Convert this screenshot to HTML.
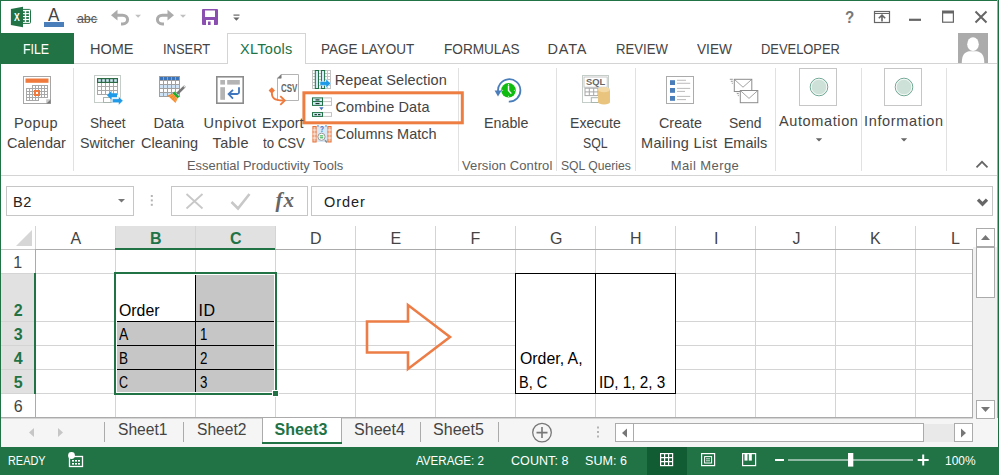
<!DOCTYPE html>
<html><head><meta charset="utf-8"><title>Excel</title>
<style>
html,body{margin:0;padding:0;background:#fff;}
#app{position:relative;width:999px;height:475px;overflow:hidden;background:#fff;font-family:"Liberation Sans",sans-serif;}
.t{position:absolute;transform-origin:0 0;white-space:pre;line-height:1;font-family:"Liberation Sans",sans-serif;}
#bg{position:absolute;left:0;top:0;}

</style></head><body>
<div id="app">
<svg id="bg" width="999" height="475" viewBox="0 0 999 475">
<g shape-rendering="crispEdges">
<!-- window borders -->
<rect x="0" y="0" width="999" height="1" fill="#217346"/>
<rect x="0" y="0" width="1" height="475" fill="#217346"/>
<rect x="997" y="0" width="1" height="475" fill="#8fb8a1"/>
<rect x="998" y="0" width="1" height="475" fill="#1c6e40"/>
<!-- FILE tab -->
<rect x="1" y="33" width="73" height="31" fill="#217346"/>
<!-- ribbon tab line -->
<rect x="74" y="63" width="923" height="1" fill="#d4d4d4"/>
<rect x="228" y="63" width="77" height="1" fill="#fff"/>
<rect x="227" y="33" width="1" height="31" fill="#d4d4d4"/>
<rect x="305" y="33" width="1" height="31" fill="#d4d4d4"/>
<rect x="227" y="33" width="79" height="1" fill="#d4d4d4"/>
<!-- ribbon bottom -->
<rect x="1" y="175" width="996" height="1" fill="#d4d4d4"/>
<!-- group separators -->
<g fill="#e1e1e1">
<rect x="73" y="68" width="1" height="103"/>
<rect x="458" y="68" width="1" height="103"/>
<rect x="556" y="68" width="1" height="103"/>
<rect x="635" y="68" width="1" height="103"/>
<rect x="775" y="68" width="1" height="103"/>
<rect x="861" y="68" width="1" height="103"/>
<rect x="946" y="68" width="1" height="103"/>
</g>
<!-- avatar -->
<rect x="958" y="33" width="30" height="30" fill="#ababab"/>
<!-- formula bar boxes -->
<g fill="#fff" stroke="#c6c6c6" stroke-width="1">
<rect x="6.5" y="186.5" width="127" height="29"/>
<rect x="171.5" y="186.5" width="136" height="29"/>
<rect x="311.5" y="186.5" width="681" height="29"/>
</g>
<!-- grid headers -->
<rect x="115" y="226" width="160" height="23" fill="#e1e1e1"/>
<rect x="1" y="273" width="34" height="121" fill="#e1e1e1"/>
<!-- gridlines -->
<g fill="#d4d4d4" id="gl">
<rect x="35" y="226" width="1" height="23"/>
<rect x="1" y="249" width="34" height="1" fill="#c6c6c6"/>
<rect x="35" y="273" width="938" height="1"/>
<rect x="35" y="321" width="938" height="1"/>
<rect x="35" y="345" width="938" height="1"/>
<rect x="35" y="369" width="938" height="1"/>
<rect x="35" y="393" width="938" height="1"/>
<rect x="115" y="226" width="1" height="191"/>
<rect x="195" y="226" width="1" height="191"/>
<rect x="275" y="226" width="1" height="191"/>
<rect x="355" y="226" width="1" height="191"/>
<rect x="435" y="226" width="1" height="191"/>
<rect x="515" y="226" width="1" height="191"/>
<rect x="595" y="226" width="1" height="191"/>
<rect x="675" y="226" width="1" height="191"/>
<rect x="755" y="226" width="1" height="191"/>
<rect x="835" y="226" width="1" height="191"/>
<rect x="915" y="226" width="1" height="191"/>
<rect x="1" y="273" width="34" height="1"/>
<rect x="1" y="321" width="34" height="1"/>
<rect x="1" y="345" width="34" height="1"/>
<rect x="1" y="369" width="34" height="1"/>
<rect x="1" y="393" width="34" height="1"/>
</g>
<!-- header borders -->
<g fill="#ababab">
<rect x="35" y="249" width="938" height="1"/>
<rect x="35" y="249" width="1" height="168"/>
<rect x="972" y="249" width="1" height="169"/>
<rect x="1" y="417" width="972" height="1"/>
</g>
<rect x="115" y="248" width="160" height="2" fill="#217346"/>
<rect x="34" y="273" width="2" height="121" fill="#217346"/>
<!-- corner triangle -->
<polygon points="32,230 32,246 16,246" fill="#d6d6d6" shape-rendering="geometricPrecision"/>
<!-- selection -->
<rect x="114" y="272" width="163" height="123" fill="#217346"/>
<rect x="116" y="274" width="159" height="119" fill="#fff"/>
<rect x="117" y="275" width="157" height="117" fill="#c6c6c6"/>
<rect x="117" y="275" width="78" height="46" fill="#fff"/>
<g fill="#000">
<rect x="195" y="275" width="1" height="117"/>
<rect x="117" y="321" width="157" height="1"/>
<rect x="117" y="345" width="157" height="1"/>
<rect x="117" y="369" width="157" height="1"/>
</g>
<rect x="272" y="390" width="7" height="7" fill="#fff"/>
<rect x="273" y="391" width="5" height="5" fill="#217346"/>
<!-- result box -->
<rect x="515" y="273" width="161" height="121" fill="#000"/>
<rect x="516" y="274" width="79" height="119" fill="#fff"/>
<rect x="596" y="274" width="79" height="119" fill="#fff"/>
<!-- sheet tab bar -->
<rect x="1" y="418" width="997" height="29" fill="#f5f5f5"/>
<rect x="616" y="424" width="357" height="18" fill="#e9e9e9"/>
<rect x="1" y="418" width="972" height="1" fill="#d4d4d4"/>
<rect x="262" y="418" width="80" height="26" fill="#fff"/>
<rect x="262" y="418" width="1" height="26" fill="#ababab"/>
<rect x="341" y="418" width="1" height="26" fill="#ababab"/>
<rect x="262" y="442" width="80" height="2" fill="#217346"/>
<g fill="#ababab">
<rect x="104" y="422" width="1" height="20"/>
<rect x="183" y="422" width="1" height="20"/>
<rect x="420" y="422" width="1" height="20"/>
<rect x="498" y="422" width="1" height="20"/>
</g>
<!-- status bar -->
<rect x="0" y="447" width="999" height="28" fill="#217346"/>
<rect x="647" y="447" width="40" height="28" fill="#125c33"/>
<!-- scrollbars -->
<rect x="973" y="247" width="24" height="171" fill="#f1f1f1"/>
<g fill="#fff" stroke="#ababab">
<rect x="976.5" y="228.5" width="18" height="18"/>
<rect x="976.5" y="247.5" width="18" height="50"/>
<rect x="976.5" y="400.5" width="18" height="18"/>
<rect x="615.5" y="423.5" width="18" height="18"/>
<rect x="633.5" y="423.5" width="290" height="18"/>
<rect x="954.5" y="423.5" width="18" height="18"/>
</g>
</g>

<!-- ================= ICONS ================= -->
<g id="icons">
<!-- excel logo -->
<g>
<rect x="21" y="9.4" width="9.5" height="14" rx="1" fill="#fff" stroke="#217346" stroke-width="1"/>
<g fill="#217346">
<rect x="23" y="11.3" width="1.8" height="1.8"/><rect x="26.2" y="11.3" width="2.7" height="1.8"/>
<rect x="23" y="14.2" width="1.8" height="1.8"/><rect x="26.2" y="14.2" width="2.7" height="1.8"/>
<rect x="23" y="17.1" width="1.8" height="1.8"/><rect x="26.2" y="17.1" width="2.7" height="1.8"/>
<rect x="23" y="20.1" width="1.8" height="1.8"/><rect x="26.2" y="20.1" width="2.7" height="1.8"/>
</g>
<polygon points="10.9,8.9 23,6.8 23,27.2 10.9,25.1" fill="#217346"/>
</g>
<!-- font color A -->
<rect x="44" y="22" width="20" height="5" fill="#4a7ebb" shape-rendering="crispEdges"/>
<!-- strike line for abc -->
<rect x="76.5" y="18.8" width="21" height="1" fill="#555"/>
<!-- undo -->
<g fill="none" stroke="#ababab" stroke-width="3">
<path d="M114 15.2H122.6a5 4.4 0 0 1 0 8.8H121"/>
</g>
<polygon points="111,15.2 117.5,9.8 117.5,20.6" fill="#ababab"/>
<polygon points="135.2,14.8 141,14.8 138.1,17.8" fill="#c0c0c0"/>
<!-- redo -->
<g fill="none" stroke="#ababab" stroke-width="3">
<path d="M171 15.2H162.4a5 4.4 0 0 0 0 8.8H164"/>
</g>
<polygon points="174,15.2 167.5,9.8 167.5,20.6" fill="#ababab"/>
<polygon points="180,14.8 186,14.8 183,17.8" fill="#c0c0c0"/>
<!-- save -->
<g>
<rect x="202" y="9" width="16" height="16" rx="1" fill="#8a4fb0"/>
<rect x="205" y="10.5" width="10" height="6.5" fill="#fff"/>
<rect x="206" y="20" width="8" height="5" fill="#fff"/>
<rect x="208" y="21.5" width="2.6" height="3.5" fill="#8a4fb0"/>
</g>
<!-- customize QAT -->
<rect x="233.5" y="14.5" width="6" height="1.2" fill="#666"/>
<polygon points="233.3,17.6 239.5,17.6 236.4,20.8" fill="#666"/>
<!-- window controls -->
<g stroke="#666" fill="none">
<rect x="874.5" y="11.5" width="15" height="11" stroke-width="1.2"/>
<path d="M874.5 13.5H889.5" stroke-width="1"/>
<path d="M882 21.5V15.5M878.8 18.3L882 15.2L885.2 18.3" stroke-width="1.6"/>
<path d="M909 19.8H921" stroke-width="2.2"/>
<rect x="942.6" y="12" width="10.8" height="10.2" stroke-width="1.2"/>
<path d="M942 12H954" stroke-width="3"/>
<path d="M975.5 11.5L986.5 22.5M986.5 11.5L975.5 22.5" stroke-width="2"/>
</g>
<!-- avatar person -->
<g fill="#fff">
<ellipse cx="973" cy="44.2" rx="5.8" ry="6.9"/>
<path d="M961.8 63C961.8 55 964.5 52.2 969 51.2L977 51.2C981.5 52.2 984.3 55 984.3 63Z"/>
</g>
<!-- collapse ribbon chevron -->
<path d="M976.5 167.3L982 161.8L987.5 167.3" stroke="#666" stroke-width="1.8" fill="none"/>

<!-- Popup calendar -->
<g>
<rect x="23.5" y="76.5" width="27" height="27" fill="#fff" stroke="#a6a6a6"/>
<rect x="25.5" y="78.5" width="23" height="4.3" fill="#f07a3e"/>
<g fill="#a8a8a8" shape-rendering="crispEdges">
<rect x="32" y="85" width="16" height="13"/>
<rect x="26" y="88" width="22" height="10"/>
<rect x="26" y="88" width="13" height="13"/>
</g>
<g fill="#fff" id="calcells" shape-rendering="crispEdges"><rect x="33.00" y="86.00" width="2" height="2"/><rect x="36.00" y="86.00" width="2" height="2"/><rect x="39.00" y="86.00" width="2" height="2"/><rect x="42.00" y="86.00" width="2" height="2"/><rect x="45.00" y="86.00" width="2" height="2"/><rect x="27.00" y="89.00" width="2" height="2"/><rect x="30.00" y="89.00" width="2" height="2"/><rect x="33.00" y="89.00" width="2" height="2"/><rect x="36.00" y="89.00" width="2" height="2"/><rect x="39.00" y="89.00" width="2" height="2"/><rect x="42.00" y="89.00" width="2" height="2"/><rect x="45.00" y="89.00" width="2" height="2"/><rect x="27.00" y="92.00" width="2" height="2"/><rect x="30.00" y="92.00" width="2" height="2"/><rect x="33.00" y="92.00" width="2" height="2"/><rect x="36.00" y="92.00" width="2" height="2"/><rect x="39.00" y="92.00" width="2" height="2"/><rect x="42.00" y="92.00" width="2" height="2"/><rect x="45.00" y="92.00" width="2" height="2"/><rect x="27.00" y="95.00" width="2" height="2"/><rect x="30.00" y="95.00" width="2" height="2"/><rect x="33.00" y="95.00" width="2" height="2"/><rect x="36.00" y="95.00" width="2" height="2"/><rect x="39.00" y="95.00" width="2" height="2"/><rect x="42.00" y="95.00" width="2" height="2"/><rect x="45.00" y="95.00" width="2" height="2"/><rect x="27.00" y="98.00" width="2" height="2"/><rect x="30.00" y="98.00" width="2" height="2"/><rect x="33.00" y="98.00" width="2" height="2"/><rect x="36.00" y="98.00" width="2" height="2"/></g>
<rect x="34" y="90" width="6" height="6" fill="#f07a3e"/>
<rect x="36" y="92" width="2" height="2" fill="#fff"/>
<polygon points="46.2,103.5 50.5,99.2 50.5,103.5" fill="#777"/>
<polygon points="46.2,103.5 46.2,99.2 50.5,99.2" fill="#c8c8c8"/>
</g>

<!-- Sheet switcher -->
<g>
<rect x="94.5" y="75.5" width="26" height="27" fill="#fff" stroke="#c5cdc9"/>
<rect x="97" y="82" width="21" height="13" fill="#a8a8a8" shape-rendering="crispEdges"/>
<g fill="#fff" id="sscells"><rect x="98.00" y="83.00" width="3" height="3"/><rect x="102.00" y="83.00" width="3" height="3"/><rect x="106.00" y="83.00" width="3" height="3"/><rect x="110.00" y="83.00" width="3" height="3"/><rect x="114.00" y="83.00" width="3" height="3"/><rect x="98.00" y="87.00" width="3" height="3"/><rect x="102.00" y="87.00" width="3" height="3"/><rect x="106.00" y="87.00" width="3" height="3"/><rect x="110.00" y="87.00" width="3" height="3"/><rect x="114.00" y="87.00" width="3" height="3"/><rect x="98.00" y="91.00" width="3" height="3"/><rect x="102.00" y="91.00" width="3" height="3"/><rect x="106.00" y="91.00" width="3" height="3"/><rect x="110.00" y="91.00" width="3" height="3"/><rect x="114.00" y="91.00" width="3" height="3"/></g>
<rect x="97" y="78" width="21" height="5" fill="#2d6b44" shape-rendering="crispEdges"/>
<g fill="#cfe6f7" id="sshead"><rect x="98.20" y="79.20" width="2.6" height="2.6"/><rect x="102.20" y="79.20" width="2.6" height="2.6"/><rect x="106.20" y="79.20" width="2.6" height="2.6"/><rect x="110.20" y="79.20" width="2.6" height="2.6"/><rect x="114.20" y="79.20" width="2.6" height="2.6"/></g>
<rect x="103.5" y="97.5" width="7.5" height="5" fill="#fff" stroke="#a8b4ae"/>
<polygon points="107,95.3 111.5,90.8 111.5,93.3 117,93.3 117,97.3 111.5,97.3 111.5,99.8" fill="#1e9ae8"/>
<polygon points="123,100.7 118.5,96.2 118.5,98.7 112.3,98.7 112.3,102.7 118.5,102.7 118.5,105.2" fill="#1e9ae8" stroke="#fff" stroke-width="0.6"/>
</g>

<!-- Data cleaning -->
<g>
<rect x="159" y="76" width="21" height="21" fill="#a0a0a0"/>
<g id="dccells"><rect x="160.00" y="77.00" width="3.0" height="3.0" fill="#3b73b9"/><rect x="164.00" y="77.00" width="3.0" height="3.0" fill="#3b73b9"/><rect x="168.00" y="77.00" width="3.0" height="3.0" fill="#3b73b9"/><rect x="172.00" y="77.00" width="3.0" height="3.0" fill="#3b73b9"/><rect x="176.00" y="77.00" width="3.0" height="3.0" fill="#3b73b9"/><rect x="160.00" y="81.00" width="3.0" height="3.0" fill="#fff"/><rect x="164.00" y="81.00" width="3.0" height="3.0" fill="#fff"/><rect x="168.00" y="81.00" width="3.0" height="3.0" fill="#fff"/><rect x="172.00" y="81.00" width="3.0" height="3.0" fill="#fff"/><rect x="176.00" y="81.00" width="3.0" height="3.0" fill="#fff"/><rect x="160.00" y="85.00" width="3.0" height="3.0" fill="#cfe3f7"/><rect x="164.00" y="85.00" width="3.0" height="3.0" fill="#cfe3f7"/><rect x="168.00" y="85.00" width="3.0" height="3.0" fill="#cfe3f7"/><rect x="172.00" y="85.00" width="3.0" height="3.0" fill="#cfe3f7"/><rect x="176.00" y="85.00" width="3.0" height="3.0" fill="#cfe3f7"/><rect x="160.00" y="89.00" width="3.0" height="3.0" fill="#fff"/><rect x="164.00" y="89.00" width="3.0" height="3.0" fill="#fff"/><rect x="168.00" y="89.00" width="3.0" height="3.0" fill="#fff"/><rect x="172.00" y="89.00" width="3.0" height="3.0" fill="#fff"/><rect x="176.00" y="89.00" width="3.0" height="3.0" fill="#fff"/><rect x="160.00" y="93.00" width="3.0" height="3.0" fill="#cfe3f7"/><rect x="164.00" y="93.00" width="3.0" height="3.0" fill="#cfe3f7"/><rect x="168.00" y="93.00" width="3.0" height="3.0" fill="#cfe3f7"/><rect x="172.00" y="93.00" width="3.0" height="3.0" fill="#cfe3f7"/><rect x="176.00" y="93.00" width="3.0" height="3.0" fill="#cfe3f7"/></g>
<path d="M184.2 86.8L178 93" stroke="#777" stroke-width="2.6" stroke-linecap="round"/>
<circle cx="184.3" cy="86.7" r="0.7" fill="#fff"/>
<polygon points="174.3,91.6 179.4,96.6 177.6,98.4 172.5,93.4" fill="#1fae2f"/>
<polygon points="172.5,93.4 177.6,98.4 175.5,103 167.6,95.6" fill="#f58a2c"/>
<g stroke="#fbb56a" stroke-width="0.6"><path d="M173.5 94.5L169.5 96.5M174.7 95.7L171.5 98.8M175.8 96.8L173.5 100.8M176.8 97.8L175 102"/></g>
</g>

<!-- Unpivot -->
<g>
<rect x="216.8" y="76.8" width="26.4" height="26.4" fill="#fff" stroke="#8c8c8c" stroke-width="1.6"/>
<g fill="#b4b4b4">
<rect x="220.3" y="80" width="4.7" height="4.6"/>
<rect x="227.2" y="80" width="12.6" height="4.6"/>
<rect x="220.3" y="87.2" width="4.7" height="12.6"/>
</g>
<path d="M239 87.2V92.2a1.8 1.8 0 0 1 -1.8 1.8H229.5" fill="none" stroke="#3f76bd" stroke-width="1.8"/>
<path d="M233 89.8L228.6 94L233 98.6" fill="none" stroke="#3f76bd" stroke-width="1.8"/>
</g>

<!-- Export CSV -->
<g>
<path d="M281.2 74.5H298.5V100.5H277.5V78.2Z" fill="#fff" stroke="#b4b4b4"/>
<path d="M281.2 74.5V78.2H277.5" fill="#777" stroke="#777" stroke-width="0.6"/>
<polygon points="271.8,87.2 275,90.5 271.8,93.8 268.6,90.5" fill="#f07a3e"/>
<path d="M271.8 92.5C271.8 98 274 100.5 283 100.5" fill="none" stroke="#f07a3e" stroke-width="1.8"/>
<path d="M280.3 96.2L284.8 100.5L280.3 104.8" fill="none" stroke="#f07a3e" stroke-width="1.8"/>
</g>

<!-- Repeat selection small icon -->
<g>
<rect x="312.5" y="70.5" width="18" height="18" fill="#fff" stroke="#c4c4c4"/>
<g stroke="#c4c4c4" stroke-width="1" shape-rendering="crispEdges"><path d="M312 73.5H331M312 76.5H331M312 79.5H331M312 82.5H331M312 85.5H331M315.5 70V89M318.5 70V89M321.5 70V89M324.5 70V89M327.5 70V89" fill="none"/></g>
<rect x="315.3" y="70.5" width="3.2" height="18" fill="#d5ebf8" stroke="#1f7044" stroke-width="1"/>
<rect x="321.4" y="70.5" width="3.2" height="18" fill="#d5ebf8" stroke="#1f7044" stroke-width="1"/>
<polygon points="320,81.4 326,81.4 326,79 330.8,83.4 326,87.9 326,85.4 320,85.4" fill="#1e9ae8" stroke="#fff" stroke-width="0.5"/>
</g>

<!-- Combine data small icon -->
<g>
<g fill="#fff" stroke="#c4c4c4"><rect x="322.5" y="97.9" width="9" height="3.7"/><rect x="322.5" y="101.6" width="9" height="3.8"/><rect x="322.5" y="112.6" width="9" height="3.8"/></g>
<g fill="#d5ebf8" stroke="#1f7044"><rect x="312.5" y="97.9" width="10" height="3.7"/><rect x="312.5" y="101.6" width="10" height="3.8"/><rect x="312.5" y="112.6" width="10" height="3.8"/></g>
<g fill="#1d3a2b"><rect x="315.5" y="99.3" width="4" height="1.2"/><rect x="315.5" y="103" width="4" height="1.2"/><rect x="314.5" y="114" width="2.4" height="1.2"/><rect x="318" y="114" width="2.4" height="1.2"/></g>
<polygon points="319.2,107.2 323.6,107.2 321.4,110.2" fill="#4472c4"/>
</g>
<!-- Columns match small icon -->
<g>
<rect x="316" y="126" width="12" height="16" fill="#d9e8f6"/>
<g fill="#9cc3e6"><rect x="317" y="125" width="2" height="2"/><rect x="325" y="125" width="2" height="2"/></g>
<g fill="#f4c7ad" stroke="#e9743a" stroke-width="1"><rect x="312.9" y="126.5" width="3.2" height="15.5"/><rect x="327.9" y="126.5" width="3.2" height="15.5"/></g>
<g stroke="#fff" stroke-width="0.8"><path d="M312.5 130H316.5M312.5 134H316.5M312.5 138H316.5M327.5 130H331.5M327.5 134H331.5M327.5 138H331.5"/></g>
<path d="M325 140.2L327 142.6" stroke="#8c8c8c" stroke-width="1.6"/>
<circle cx="321.5" cy="136.8" r="3.6" fill="#fff" stroke="#9a9a9a" stroke-width="1"/>
<path d="M319.8 135.9H323.2M319.8 137.8H323.2" stroke="#1fa83a" stroke-width="1"/>
</g>
<!-- Enable (version control) -->
<g>
<path d="M498.2 92.5A11.2 11.2 0 1 1 508.8 101.6" fill="none" stroke="#4a7ebb" stroke-width="1.8"/>
<polygon points="494.6,90.6 501.6,90.6 498,96.4" fill="#4a7ebb"/>
<circle cx="508.5" cy="90.3" r="7.3" fill="#10bb10"/>
<path d="M508.5 85.6V90.5L511.3 93.6" fill="none" stroke="#fff" stroke-width="1.4"/>
<g fill="#fff"><circle cx="508.5" cy="84.4" r="0.5"/><circle cx="514.3" cy="90.3" r="0.5"/><circle cx="508.5" cy="96.2" r="0.5"/><circle cx="502.7" cy="90.3" r="0.5"/></g>
</g>
<!-- Execute SQL -->
<g>
<rect x="582.5" y="75.5" width="26" height="27" fill="#fff" stroke="#c5cdc9"/>
<rect x="584" y="77" width="23.2" height="10.2" fill="#fff" stroke="#b9b9b9" stroke-width="0.8"/>
<g fill="none" stroke="#a8a8a8" stroke-width="1"><rect x="585" y="88.2" width="13" height="7.4"/><path d="M585 91.9H598M589.3 88.2V95.6M593.7 88.2V95.6"/></g>
<rect x="591.3" y="97.7" width="7.2" height="4.8" fill="#fff" stroke="#a8b4ae"/>
<path d="M598 89.5V102a6 2.6 0 0 0 12 0V89.5Z" fill="#e9c47e"/>
<ellipse cx="604" cy="89.6" rx="6" ry="2.6" fill="#f3d9a6"/>
</g>
<!-- Mailing list -->
<g>
<rect x="666.5" y="76.5" width="27" height="27" fill="#fff" stroke="#ababab"/>
<g fill="#4a7ebb"><rect x="670" y="80.2" width="5" height="4.8"/><rect x="670" y="88" width="5" height="4.8"/><rect x="670" y="96" width="5" height="4.8"/></g>
<g fill="#b4b4b4"><rect x="677" y="79.8" width="9" height="0.9"/><rect x="677" y="82.8" width="13.2" height="0.9"/><rect x="677" y="87.9" width="13.2" height="0.9"/><rect x="677" y="90.9" width="8" height="0.9"/><rect x="677" y="95.9" width="13.2" height="0.9"/><rect x="677" y="99.2" width="9" height="0.9"/></g>
</g>
<!-- Send emails -->
<g fill="#fff" stroke="#8c8c8c" stroke-width="1">
<rect x="734.3" y="79.3" width="17.5" height="12.2"/>
<path d="M734.5 79.5L743 87.2L751.6 79.5" fill="none" stroke-width="0.8"/>
<rect x="740.3" y="90.5" width="17.5" height="12.2"/>
<path d="M740.5 90.7L749 98.4L757.6 90.7" fill="none" stroke-width="0.8"/>
</g>
<g fill="#8c8c8c"><rect x="729.8" y="78.8" width="3" height="0.9"/><rect x="730.8" y="80.8" width="2" height="0.9"/><rect x="731.8" y="82.8" width="1" height="0.9"/><rect x="735.8" y="91.2" width="3" height="0.9"/><rect x="736.8" y="93.2" width="2" height="0.9"/><rect x="737.8" y="95.2" width="1" height="0.9"/></g>
<!-- Automation / Information -->
<g fill="#fff" stroke="#c6c6c6"><rect x="799.5" y="68.5" width="37" height="37"/><rect x="884.5" y="68.5" width="37" height="37"/></g>
<g fill="#cde1d9" stroke="#6fa893" stroke-width="1"><circle cx="819" cy="87" r="8.8"/><circle cx="904" cy="87" r="8.8"/></g>
<g fill="none" stroke="#fff" stroke-width="0.8"><circle cx="819" cy="87" r="7.8"/><circle cx="904" cy="87" r="7.8"/></g>
<polygon points="815.8,138.2 822.2,138.2 819,141.4" fill="#666"/>
<polygon points="900.8,138.2 907.2,138.2 904,141.4" fill="#666"/>

<!-- formula bar -->
<polygon points="118,199 125,199 121.5,202.6" fill="#777"/>
<g fill="#b4b4b4"><rect x="150.8" y="195" width="2" height="2"/><rect x="150.8" y="199.4" width="2" height="2"/><rect x="150.8" y="203.8" width="2" height="2"/></g>
<path d="M186.5 194L202.5 208.5M202.5 194L186.5 208.5" stroke="#c8c8c8" stroke-width="1.8" fill="none"/>
<path d="M231.5 202L238 208.5L249.5 194" stroke="#c8c8c8" stroke-width="2.6" fill="none"/>
<path d="M978 199.6L982.5 204.2L987 199.6" stroke="#666" stroke-width="3.2" fill="none"/>
<!-- scroll arrows -->
<g fill="#777">
<polygon points="981,240 990,240 985.5,235"/>
<polygon points="981,407 990,407 985.5,412"/>
<polygon points="627,428.5 627,437.5 622,433"/>
<polygon points="961,428.5 961,437.5 966,433"/>
</g>
<!-- sheet nav -->
<g fill="#c6c6c6"><polygon points="34,428 34,437 29,432.5"/><polygon points="58,428 58,437 63,432.5"/></g>
<circle cx="542" cy="432.6" r="9.3" fill="none" stroke="#777" stroke-width="1.3"/>
<path d="M536.5 432.6H547.5M542 427.1V438.1" stroke="#777" stroke-width="1.6"/>
<g fill="#b4b4b4"><rect x="597" y="426.5" width="2" height="2"/><rect x="597" y="431" width="2" height="2"/><rect x="597" y="435.5" width="2" height="2"/></g>
<!-- status bar icons -->
<g>
<rect x="69.5" y="456.5" width="13" height="10" fill="none" stroke="#fff" stroke-width="1.3"/>
<g fill="#fff"><circle cx="71.5" cy="455.5" r="3.4"/>
<rect x="72" y="460" width="2" height="1.6"/><rect x="75" y="460" width="2" height="1.6"/><rect x="78" y="460" width="2" height="1.6"/>
<rect x="72" y="463" width="2" height="1.6"/><rect x="75" y="463" width="2" height="1.6"/><rect x="78" y="463" width="2" height="1.6"/></g>
</g>
<g fill="none" stroke="#fff" stroke-width="1.2">
<rect x="660.6" y="453.6" width="12" height="12"/><path d="M660.6 457.6H672.6M660.6 461.6H672.6M664.6 453.6V465.6M668.6 453.6V465.6"/>
<rect x="701.6" y="453.6" width="13" height="12"/><rect x="704.6" y="456.6" width="7" height="6.4" stroke-width="1"/><path d="M706 458.8H710M706 460.8H710" stroke-width="0.8"/>
<rect x="742.6" y="453.6" width="13" height="12"/>
</g>
<g fill="#fff"><rect x="744.5" y="453.6" width="3" height="7"/><rect x="748.8" y="453.6" width="3" height="7"/>
<rect x="775" y="459" width="9" height="2"/>
<rect x="788" y="459.5" width="125" height="1"/>
<rect x="848" y="453" width="5.3" height="13.6"/>
<rect x="917.7" y="459" width="11" height="2"/><rect x="922.2" y="454.5" width="2" height="11"/>
</g>
</g>
<!-- orange highlight box -->
<rect x="303.9" y="92.8" width="158.4" height="30" fill="none" stroke="#ed7d40" stroke-width="3"/>
<!-- arrow -->
<polygon points="367,321.5 408,321.5 408,305 450,337 408,369 408,352.5 367,352.5" fill="none" stroke="#ed7d47" stroke-width="2.6" stroke-linejoin="miter"/>
</svg>

<span class="t" style="left:23.15px;top:42.00px;font-size:14.5px;color:#fff;transform:scaleX(0.8514);">FILE</span>
<span class="t" style="left:90.00px;top:42.00px;font-size:14.5px;color:#444444;letter-spacing:-0.010px;">HOME</span>
<span class="t" style="left:162.61px;top:42.00px;font-size:14.5px;color:#444444;transform:scaleX(0.8933);">INSERT</span>
<span class="t" style="left:240.00px;top:42.00px;font-size:14.5px;color:#217346;letter-spacing:0.290px;">XLTools</span>
<span class="t" style="left:320.57px;top:42.00px;font-size:14.5px;color:#444444;transform:scaleX(0.9313);">PAGE LAYOUT</span>
<span class="t" style="left:443.76px;top:42.00px;font-size:14.5px;color:#444444;transform:scaleX(0.9380);">FORMULAS</span>
<span class="t" style="left:547.40px;top:42.00px;font-size:14.5px;color:#444444;letter-spacing:0.851px;">DATA</span>
<span class="t" style="left:615.59px;top:42.00px;font-size:14.5px;color:#444444;transform:scaleX(0.9060);">REVIEW</span>
<span class="t" style="left:696.80px;top:42.00px;font-size:14.5px;color:#444444;transform:scaleX(0.9419);">VIEW</span>
<span class="t" style="left:761.01px;top:42.00px;font-size:14.5px;color:#444444;transform:scaleX(0.8902);">DEVELOPER</span>
<span class="t" style="left:14.00px;top:116.00px;font-size:14.5px;color:#444444;letter-spacing:0.409px;">Popup</span>
<span class="t" style="left:7.00px;top:136.00px;font-size:14.5px;color:#444444;">Calendar</span>
<span class="t" style="left:90.40px;top:116.00px;font-size:14.5px;color:#444444;transform:scaleX(0.9402);">Sheet</span>
<span class="t" style="left:80.00px;top:136.00px;font-size:14.5px;color:#444444;transform:scaleX(0.9862);">Switcher</span>
<span class="t" style="left:153.50px;top:116.00px;font-size:14.5px;color:#444444;letter-spacing:-0.021px;">Data</span>
<span class="t" style="left:141.00px;top:136.00px;font-size:14.5px;color:#444444;letter-spacing:-0.024px;">Cleaning</span>
<span class="t" style="left:203.50px;top:116.00px;font-size:14.5px;color:#444444;letter-spacing:0.561px;">Unpivot</span>
<span class="t" style="left:212.60px;top:136.00px;font-size:14.5px;color:#444444;letter-spacing:0.325px;">Table</span>
<span class="t" style="left:261.61px;top:116.00px;font-size:14.5px;color:#444444;transform:scaleX(0.9883);">Export</span>
<span class="t" style="left:262.60px;top:136.00px;font-size:14.5px;color:#444444;transform:scaleX(0.9122);">to CSV</span>
<span class="t" style="left:334.70px;top:73.00px;font-size:14.5px;color:#444444;letter-spacing:0.109px;">Repeat Selection</span>
<span class="t" style="left:335.50px;top:100.00px;font-size:14.5px;color:#444444;letter-spacing:0.116px;">Combine Data</span>
<span class="t" style="left:335.50px;top:127.00px;font-size:14.5px;color:#444444;letter-spacing:0.036px;">Columns Match</span>
<span class="t" style="left:484.02px;top:116.00px;font-size:14.5px;color:#444444;transform:scaleX(0.9845);">Enable</span>
<span class="t" style="left:569.83px;top:116.00px;font-size:14.5px;color:#444444;transform:scaleX(0.9702);">Execute</span>
<span class="t" style="left:583.40px;top:136.00px;font-size:14.5px;color:#444444;transform:scaleX(0.8497);">SQL</span>
<span class="t" style="left:659.00px;top:116.00px;font-size:14.5px;color:#444444;transform:scaleX(0.9895);">Create</span>
<span class="t" style="left:641.00px;top:136.00px;font-size:14.5px;color:#444444;letter-spacing:0.318px;">Mailing List</span>
<span class="t" style="left:729.00px;top:116.00px;font-size:14.5px;color:#444444;transform:scaleX(0.9556);">Send</span>
<span class="t" style="left:723.70px;top:136.00px;font-size:14.5px;color:#444444;letter-spacing:0.009px;">Emails</span>
<span class="t" style="left:779.00px;top:114.00px;font-size:14.5px;color:#444444;letter-spacing:0.613px;">Automation</span>
<span class="t" style="left:864.00px;top:114.00px;font-size:14.5px;color:#444444;letter-spacing:0.653px;">Information</span>
<span class="t" style="left:186.71px;top:159.00px;font-size:13px;color:#5e5e5e;transform:scaleX(0.9936);">Essential Productivity Tools</span>
<span class="t" style="left:462.00px;top:159.00px;font-size:13px;color:#5e5e5e;letter-spacing:0.101px;">Version Control</span>
<span class="t" style="left:560.70px;top:159.00px;font-size:13px;color:#5e5e5e;transform:scaleX(0.9346);">SQL Queries</span>
<span class="t" style="left:670.70px;top:159.00px;font-size:13px;color:#5e5e5e;letter-spacing:0.426px;">Mail Merge</span>
<span class="t" style="left:13.80px;top:12.00px;font-size:11.5px;color:#fff;transform:scaleX(0.7500);font-weight:bold;">X</span>
<span class="t" style="left:48.00px;top:7.00px;font-size:17.5px;color:#444;transform:scaleX(0.9750);">A</span>
<span class="t" style="left:76.90px;top:12.00px;font-size:13.5px;color:#555;transform:scaleX(0.9130);">abc</span>
<span class="t" style="left:844.80px;top:10.00px;font-size:16px;color:#777;transform:scaleX(0.9444);font-weight:bold;">?</span>
<span class="t" style="left:280.60px;top:83.00px;font-size:10.5px;color:#666;transform:scaleX(0.7597);font-weight:bold;">CSV</span>
<span class="t" style="left:320.00px;top:125.00px;font-size:9px;color:#4472c4;transform:scaleX(0.7200);font-weight:bold;">?</span>
<span class="t" style="left:585.60px;top:77.00px;font-size:9.5px;color:#666;transform:scaleX(0.9835);font-weight:bold;">SQL</span>
<span class="t" style="left:275.50px;top:190.00px;font-size:21px;color:#666;letter-spacing:1.007px;font-weight:bold;font-style:italic;font-family:'Liberation Serif', serif;">fx</span>
<span class="t" style="left:12.90px;top:195.00px;font-size:14.5px;color:#222;letter-spacing:0.629px;">B2</span>
<span class="t" style="left:324.00px;top:195.00px;font-size:14.5px;color:#222;letter-spacing:0.941px;">Order</span>
<span class="t" style="left:70.50px;top:231.00px;font-size:16px;color:#444444;">A</span>
<span class="t" style="left:150.00px;top:231.00px;font-size:16px;color:#217346;font-weight:bold;">B</span>
<span class="t" style="left:230.00px;top:231.00px;font-size:16px;color:#217346;font-weight:bold;">C</span>
<span class="t" style="left:310.00px;top:231.00px;font-size:16px;color:#444444;">D</span>
<span class="t" style="left:390.50px;top:231.00px;font-size:16px;color:#444444;">E</span>
<span class="t" style="left:470.50px;top:231.00px;font-size:16px;color:#444444;">F</span>
<span class="t" style="left:550.00px;top:231.00px;font-size:16px;color:#444444;">G</span>
<span class="t" style="left:630.00px;top:231.00px;font-size:16px;color:#444444;">H</span>
<span class="t" style="left:714.00px;top:231.00px;font-size:16px;color:#444444;">I</span>
<span class="t" style="left:792.50px;top:231.00px;font-size:16px;color:#444444;">J</span>
<span class="t" style="left:870.00px;top:231.00px;font-size:16px;color:#444444;">K</span>
<span class="t" style="left:951.00px;top:231.00px;font-size:16px;color:#444444;">L</span>
<span class="t" style="left:13.30px;top:255.00px;font-size:16px;color:#444444;">1</span>
<span class="t" style="left:13.80px;top:303.00px;font-size:16px;color:#217346;font-weight:bold;">2</span>
<span class="t" style="left:13.80px;top:327.00px;font-size:16px;color:#217346;font-weight:bold;">3</span>
<span class="t" style="left:13.80px;top:351.00px;font-size:16px;color:#217346;font-weight:bold;">4</span>
<span class="t" style="left:13.80px;top:375.00px;font-size:16px;color:#217346;font-weight:bold;">5</span>
<span class="t" style="left:13.80px;top:399.00px;font-size:16px;color:#444444;">6</span>
<span class="t" style="left:119.40px;top:303.00px;font-size:16px;color:#000;transform:scaleX(0.9911);">Order</span>
<span class="t" style="left:198.50px;top:303.00px;font-size:16px;color:#000;letter-spacing:0.655px;">ID</span>
<span class="t" style="left:119.40px;top:327.00px;font-size:16px;color:#000;transform:scaleX(0.8727);">A</span>
<span class="t" style="left:199.58px;top:327.00px;font-size:16px;color:#000;transform:scaleX(0.8250);">1</span>
<span class="t" style="left:119.06px;top:351.00px;font-size:16px;color:#000;transform:scaleX(0.8444);">B</span>
<span class="t" style="left:200.00px;top:351.00px;font-size:16px;color:#000;transform:scaleX(0.8333);">2</span>
<span class="t" style="left:119.40px;top:375.00px;font-size:16px;color:#000;transform:scaleX(0.7818);">C</span>
<span class="t" style="left:200.00px;top:375.00px;font-size:16px;color:#000;transform:scaleX(0.8333);">3</span>
<span class="t" style="left:519.75px;top:351.00px;font-size:16px;color:#000;transform:scaleX(0.9909);">Order, A,</span>
<span class="t" style="left:519.40px;top:375.00px;font-size:16px;color:#000;transform:scaleX(0.9032);">B, C</span>
<span class="t" style="left:598.64px;top:375.00px;font-size:16px;color:#000;transform:scaleX(0.9552);">ID, 1, 2, 3</span>
<span class="t" style="left:117.50px;top:422.00px;font-size:16px;color:#444444;transform:scaleX(0.9742);">Sheet1</span>
<span class="t" style="left:196.50px;top:422.00px;font-size:16px;color:#444444;transform:scaleX(0.9742);">Sheet2</span>
<span class="t" style="left:274.50px;top:422.00px;font-size:16px;color:#217346;letter-spacing:0.086px;font-weight:bold;">Sheet3</span>
<span class="t" style="left:354.00px;top:422.00px;font-size:16px;color:#444444;letter-spacing:0.037px;">Sheet4</span>
<span class="t" style="left:433.00px;top:422.00px;font-size:16px;color:#444444;letter-spacing:0.037px;">Sheet5</span>
<span class="t" style="left:7.88px;top:455.00px;font-size:12.5px;color:#fff;transform:scaleX(0.8718);">READY</span>
<span class="t" style="left:416.00px;top:455.00px;font-size:12.5px;color:#fff;transform:scaleX(0.9257);">AVERAGE: 2</span>
<span class="t" style="left:511.00px;top:455.00px;font-size:12.5px;color:#fff;letter-spacing:0.071px;">COUNT: 8</span>
<span class="t" style="left:585.00px;top:455.00px;font-size:12.5px;color:#fff;letter-spacing:0.055px;">SUM: 6</span>
<span class="t" style="left:944.60px;top:455.00px;font-size:12.5px;color:#fff;transform:scaleX(0.9543);">100%</span>
</div>
</body></html>
